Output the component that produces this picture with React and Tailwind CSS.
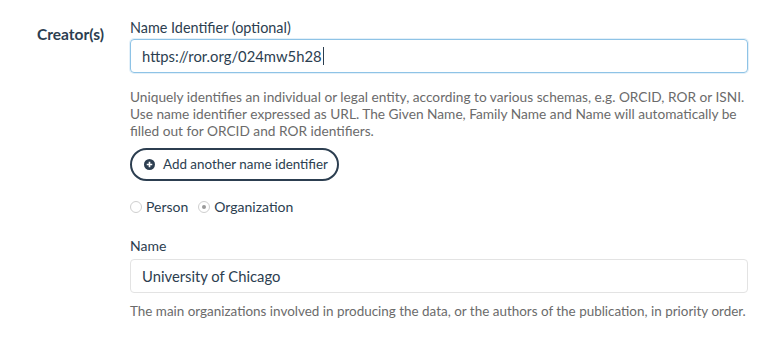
export default function App() {
  return (
    <div className="w-[768px] h-[339px] bg-white overflow-hidden" style={{ fontFamily: "Lato, 'Open Sans', sans-serif" }}>
      <div className="flex items-start pt-[19px]">
        <div className="w-[130px] shrink-0 pl-[37px] pt-[5px] text-[15.5px] font-bold text-[#2c3e50] leading-[20px]">Creator(s)</div>
        <div className="w-[618px] flex flex-col">
          <label className="text-[14.4px] leading-[17px] text-[#2c3e50]">Name Identifier (optional)</label>
          <div className="mt-[3px] h-[34px] rounded-[4px] border border-[#8ec3e6] flex items-center px-[11px] text-[14.8px] text-[#2c3e50] shadow-[0_0_0_1px_rgba(142,195,230,0.25)]">
            https://ror.org/024mw5h28<span className="inline-block w-px h-[18px] bg-[#2c3e50] ml-px"></span>
          </div>
          <p className="mt-[15px] text-[13.7px] leading-[17px] text-[#6b6b6b] whitespace-nowrap">
            Uniquely identifies an individual or legal entity, according to various schemas, e.g. ORCID, ROR or ISNI.<br />
            Use name identifier expressed as URL. The Given Name, Family Name and Name will automatically be<br />
            filled out for ORCID and ROR identifiers.
          </p>
          <div className="mt-[9px]">
            <button className="h-[33px] rounded-full border-[2px] border-[#2c3e50] pl-[12px] pr-[9px] flex items-center gap-[8px] text-[13.4px] text-[#2c3e50]">
              <svg width="11" height="11" viewBox="0 0 16 16">
                <circle cx="8" cy="8" r="8" fill="#2c3e50" />
                <path d="M8 4v8M4 8h8" stroke="white" strokeWidth="2.4" />
              </svg>
              Add another name identifier
            </button>
          </div>
          <div className="mt-[17px] flex items-center text-[14px] text-[#2c3e50] leading-[17px]">
            <span className="w-[12px] h-[12px] rounded-full border border-[#cfcfcf] inline-block"></span>
            <span className="ml-[4px]">Person</span>
            <span className="ml-[10px] w-[12px] h-[12px] rounded-full border border-[#cfcfcf] inline-flex items-center justify-center">
              <span className="w-[4px] h-[4px] rounded-full bg-[#9a9a9a]"></span>
            </span>
            <span className="ml-[4px]">Organization</span>
          </div>
          <label className="mt-[22px] text-[14px] leading-[17px] text-[#2c3e50]">Name</label>
          <div className="mt-[5px] h-[34px] rounded-[4px] border border-[#e3e3e3] flex items-center px-[11px] text-[14.8px] text-[#2c3e50]">
            University of Chicago
          </div>
          <p className="mt-[10px] text-[13.45px] leading-[17px] text-[#6b6b6b] whitespace-nowrap">
            The main organizations involved in producing the data, or the authors of the publication, in priority order.
          </p>
        </div>
      </div>
    </div>
  );
}
